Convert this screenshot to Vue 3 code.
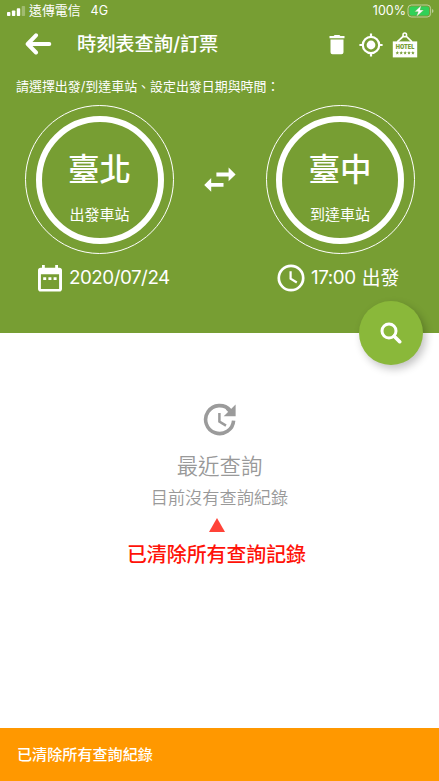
<script setup>
const stations = [
  { name: '臺北', label: '出發車站' },
  { name: '臺中', label: '到達車站' },
]
</script>

<template>
  <div class="screen">
    <header class="top">
      <div class="status">
        <svg class="signal" width="19" height="10" viewBox="0 0 19 10" fill="#fff">
          <rect x="0" y="6" width="3.4" height="4" rx=".8" />
          <rect x="4.9" y="4.4" width="3.4" height="5.6" rx=".8" />
          <rect x="9.8" y="2.2" width="3.4" height="7.8" rx=".8" />
          <rect x="14.7" y="0" width="3.4" height="10" rx=".8" opacity=".3" />
        </svg>
        <span class="carrier">遠傳電信</span>
        <span class="network">4G</span>
        <span class="percent">100%</span>
        <svg class="battery" width="28" height="14" viewBox="0 0 28 14">
          <rect x="1" y="1" width="22.6" height="12" rx="3.4" fill="none" stroke="#fff" stroke-opacity=".5" />
          <rect x="2.5" y="2.5" width="19.6" height="9" rx="2" fill="#30d158" />
          <path d="M25 5v4q1.5-.6 1.5-2T25 5z" fill="#fff" opacity=".5" />
          <path d="M14.4 1.2 7.6 7.8h3.6L9.2 13 16.8 6h-3.7z" fill="#fff" stroke="#5f9c3c" stroke-width=".4" />
        </svg>
      </div>

      <div class="appbar">
        <svg class="back" width="27" height="22" viewBox="0 0 27 22" fill="none" stroke="#fff" stroke-width="4" stroke-linecap="round" stroke-linejoin="round">
          <path d="M11 2.3 2.7 11 11 19.5M3.2 11H24.3" />
        </svg>
        <h1>時刻表查詢/訂票</h1>
        <svg class="trash" width="16" height="20" viewBox="0 0 16 20" fill="#fff">
          <path d="M.5 1H4.6L5.6 0h4.8l1 1h4.1v2.3H.5zM1.5 4.4h13v12.8q0 2-2 2h-9q-2 0-2-2z" />
        </svg>
        <svg class="locate" width="24" height="24" viewBox="0 0 24 24" fill="none" stroke="#fff" stroke-width="2.2">
          <circle cx="12" cy="12" r="8.2" />
          <circle cx="12" cy="12" r="4.4" fill="#fff" stroke="none" />
          <path d="M12 .4V4M12 20v3.6M.4 12H4M20 12h3.6" />
        </svg>
        <svg class="hotel" width="26" height="26" viewBox="0 0 26 26">
          <path d="M5.2 9.8 11.6 4M20 9.8 14 4" stroke="#fff" stroke-width="1.7" />
          <circle cx="12.8" cy="2.9" r="1.8" fill="none" stroke="#fff" stroke-width="1.5" />
          <rect x=".8" y="9.4" width="24.4" height="16" fill="#fff" />
          <text x="13" y="17.4" text-anchor="middle" textLength="18.5" lengthAdjust="spacingAndGlyphs" class="hotel-text">HOTEL</text>
          <g fill="#779e35">
            <path v-for="n in 5" :key="n" :transform="`translate(${1.4 + n * 3.9} 20.8)`" d="M0-1.7.5-.5 1.7-.4.8.4 1.1 1.6 0 .9-1.1 1.6-.8.4-1.7-.4-.5-.5z" />
          </g>
        </svg>
      </div>

      <p class="hint">請選擇出發/到達車站、設定出發日期與時間：</p>

      <div class="route">
        <button class="station">
          <span class="ring">
            <span class="name">{{ stations[0].name }}</span>
            <span class="label">{{ stations[0].label }}</span>
          </span>
        </button>
        <svg class="swap" width="32" height="26" viewBox="0 0 32 26" fill="#fff">
          <path d="M12.4 5.5h12.2V.6L31.6 7.4l-7 6.9V9.4H12.4zM19.5 15.9H7.2V11L.2 17.9l7 6.9v-5.1h12.3z" />
        </svg>
        <button class="station">
          <span class="ring">
            <span class="name">{{ stations[1].name }}</span>
            <span class="label">{{ stations[1].label }}</span>
          </span>
        </button>
      </div>

      <div class="when">
        <svg width="24" height="27" viewBox="0 0 24 27">
          <path fill="#fff" fill-rule="evenodd" d="M4 0h2.8v2.8h10.4V0H20v2.8h1.2Q24 2.8 24 5.6v18.2q0 2.8-2.8 2.8H2.8Q0 26.6 0 23.8V5.6Q0 2.8 2.8 2.8H4zM2.9 9.2v14.7h18.2V9.2z" />
          <path fill="#fff" d="M5.2 12.2h3v2.9h-3zM10.4 12.2h3v2.9h-3zM15.6 12.2h3v2.9h-3z" />
        </svg>
        <span class="date">2020/07/24</span>
        <svg class="clock" width="28" height="28" viewBox="0 0 28 28" fill="none" stroke="#fff">
          <circle cx="14" cy="14" r="12.2" stroke-width="2.7" />
          <path d="M13.6 7.2v7.5l6.2 3.8" stroke-width="2.2" />
        </svg>
        <span class="time"><span class="hour">17:00</span><span class="depart">出發</span></span>
      </div>
      <button class="fab" aria-label="查詢">
        <svg width="22" height="22" viewBox="0 0 22 22" fill="none" stroke="#fff">
          <circle cx="9" cy="9" r="7" stroke-width="3" />
          <path d="m14.2 14.2 5.5 5.5" stroke-width="3.6" stroke-linecap="round" />
        </svg>
      </button>
    </header>

    <main class="empty">
      <svg width="34" height="34" viewBox="0 0 34 34">
        <path d="M27.2 7.4A14 14 0 1 0 30.6 17.6" fill="none" stroke="#9b9b9b" stroke-width="3.6" />
        <path d="M32.6 1.4v11.9H20.7z" fill="#9b9b9b" />
        <path d="M24 5.2l4.6 4.6" stroke="#9b9b9b" stroke-width="3.6" />
        <path d="M16.4 10v8.6l6.6 4" fill="none" stroke="#9b9b9b" stroke-width="2.5" />
      </svg>
      <h2>最近查詢</h2>
      <p class="none">目前沒有查詢紀錄</p>
      <svg class="pointer" width="16" height="14" viewBox="0 0 16 14"><path d="M8 0 16 14H0z" fill="#ff4338" /></svg>
      <p class="cleared">已清除所有查詢記錄</p>
    </main>

    <footer class="snackbar">已清除所有查詢紀錄</footer>
  </div>
</template>

<style>
body { margin: 0; background: #fff; }
</style>

<style scoped>
* { box-sizing: border-box; }
.screen {
  width: 439px;
  height: 781px;
  display: flex;
  flex-direction: column;
  overflow: hidden;
  background: #fff;
  color: #fff;
  font-family: Inter, "Noto Sans CJK TC", sans-serif;
}
svg { display: block; flex: none; }
span, p, h1, h2, footer { white-space: nowrap; }
h1, h2, p { margin: 0; }
button { padding: 0; background: none; border: 0; color: inherit; font-family: inherit; }
.top { position: relative; flex: none; height: 333px; background: #779e33; }
.status { display: flex; align-items: center; height: 22px; padding: 0 4px 0 7px; font-size: 12.5px; line-height: 22px; }
.carrier { margin-left: 3px; font-size: 12.9px; }
.network { margin-left: 10px; }
.percent { margin-left: auto; }
.battery { margin-left: 1px; }
.appbar { display: flex; align-items: center; height: 44px; padding: 0 21px 0 25px; }
h1 { margin: 0 auto 0 25px; font-size: 19.3px; font-weight: 500; line-height: 44px; letter-spacing: -.1px; }
.trash { margin: 2px 14px 0 0; }
.locate { margin: 1px 9px 0 0; }
.hotel { margin-top: 1px; }
.hotel-text { font: 900 6px Inter, sans-serif; fill: #779e35; }
.hint { height: 39px; padding-left: 16px; font-size: 12.95px; line-height: 40px; }
.route { display: flex; justify-content: space-between; align-items: center; height: 149px; padding: 0 24.5px 0 25px; }
.station { display: grid; place-items: center; width: 149px; height: 149px; border: 1px solid #fff; border-radius: 50%; }
.ring { display: flex; flex-direction: column; align-items: center; width: 128px; height: 128px; padding-top: 28px; border: 6px solid #fff; border-radius: 50%; }
.name { height: 40px; font-size: 31.5px; font-weight: 500; line-height: 40px; }
.label { margin-top: 15px; font-size: 15px; line-height: 20px; }
.swap { margin-top: 1px; }
.when { display: flex; align-items: center; height: 46px; padding: 2px 0 0 38px; }
.date { width: 208px; margin-left: 7px; font-size: 18.8px; line-height: 24px; letter-spacing: -.48px; }
.time { display: flex; align-items: center; gap: 6px; margin: -1px 0 0 6px; font-size: 18.8px; line-height: 24px; }
.hour { letter-spacing: -.4px; }
.depart { padding-top: 2px; }
.fab { position: absolute; right: 16px; bottom: -32px; display: grid; place-items: center; width: 64px; height: 64px; border-radius: 50%; background: #8ab83a; box-shadow: 3px 4px 9px rgba(0, 0, 0, .24); }
.empty { flex: 1; display: flex; flex-direction: column; align-items: center; padding-top: 70px; color: #999; }
h2 { margin-top: 13px; font-size: 21.4px; font-weight: 350; line-height: 32px; }
.none { margin-top: 2px; font-size: 17.2px; font-weight: 350; line-height: 28px; }
.pointer { margin: 6px 5px 0 0; }
.cleared { margin: 7px 6px 0 0; color: #ff1208; font-size: 19.9px; font-weight: 500; line-height: 32px; }
.snackbar { flex: none; height: 53px; padding-left: 17px; background: #ff9800; font-size: 15.1px; font-weight: 500; line-height: 53px; }
</style>
